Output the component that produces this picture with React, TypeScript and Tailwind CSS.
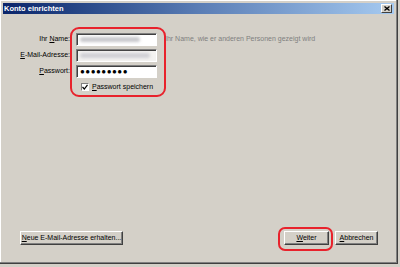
import React from "react";

const font = { fontFamily: '"Liberation Sans", "DejaVu Sans", Arial, sans-serif' };

function Btn({ children, className }: { children: React.ReactNode; className: string }) {
  return (
    <div className={`flex h-[14px] items-center justify-center border border-t-white border-l-white border-r-[#404040] border-b-[#404040] bg-[#d4d0c8] shadow-[inset_-1px_-1px_0_#808080] text-[7px] text-black ${className}`}>
      {children}
    </div>
  );
}

function Field({ children, bg }: { children?: React.ReactNode; bg: string }) {
  return (
    <div className={`flex h-[13px] w-[81px] items-center border border-t-[#808080] border-l-[#808080] border-r-white border-b-white ${bg} pl-[3px] shadow-[inset_1px_1px_0_#404040]`}>
      {children}
    </div>
  );
}

export default function App() {
  return (
    <div className="h-[267px] w-[400px] overflow-hidden bg-[#d4d0c8]" style={font}>
      <div className="flex h-[264px] w-[398px] flex-col border-b border-r border-b-[#404040] border-r-[#404040] shadow-[inset_-1px_-1px_0_#808080,inset_1px_1px_0_#ffffff] p-[3px]">
        <div className="flex h-[11px] items-center justify-between bg-gradient-to-r from-[#0a246a] via-[#5a7db5] to-[#a6caf0] pl-[1px] pr-[2px]">
          <span className="text-[7.5px] font-bold leading-none text-white">Konto einrichten</span>
          <div className="flex h-[9px] w-[11px] items-center justify-center border border-t-white border-l-white border-r-[#404040] border-b-[#404040] bg-[#d4d0c8]">
            <svg width="6" height="5" viewBox="0 0 6 5">
              <path d="M0.5 0.5 L5.5 4.5 M5.5 0.5 L0.5 4.5" stroke="#000" strokeWidth="1.3" />
            </svg>
          </div>
        </div>
        <div className="relative flex flex-1 flex-col">
          <div className="ml-[15px] mt-[19px] grid grid-cols-[52px_81px_auto] items-center gap-x-[6px] gap-y-[3px]">
            <span className="text-right text-[7px] text-black">Ihr <u>N</u>ame:</span>
            <Field bg="bg-white">
              <div className="h-[5px] w-[60px] rounded-sm bg-[#c8c8cc] blur-[1.5px]" />
            </Field>
            <span className="ml-[2px] text-[7px] text-[#808080]">Ihr Name, wie er anderen Personen gezeigt wird</span>
            <span className="text-right text-[7px] text-black"><u>E</u>-Mail-Adresse:</span>
            <Field bg="bg-[#f4f3f1]">
              <div className="h-[5px] w-[70px] rounded-sm bg-[#cfcfd4] blur-[1.5px]" />
            </Field>
            <span />
            <span className="text-right text-[7px] text-black"><u>P</u>asswort:</span>
            <Field bg="bg-white">
              <span className="text-[8px] leading-none tracking-[0.5px] text-black">●●●●●●●●●</span>
            </Field>
            <span />
          </div>
          <div className="ml-[78px] mt-[4px] flex items-center gap-[3px]">
            <div className="flex h-[8px] w-[8px] items-center justify-center border border-t-[#808080] border-l-[#808080] border-r-white border-b-white bg-white">
              <svg width="6" height="6" viewBox="0 0 6 6">
                <path d="M0.5 3 L2.3 5 L5.5 0.8" stroke="#000" strokeWidth="1.2" fill="none" />
              </svg>
            </div>
            <span className="text-[7px] text-black"><u>P</u>asswort speichern</span>
          </div>
          <div className="mt-auto mb-[15px] flex items-center">
            <Btn className="ml-[17px] w-[103px]"><span><u>N</u>eue E-Mail-Adresse erhalten...</span></Btn>
            <Btn className="ml-auto w-[45px]"><span><u>W</u>eiter</span></Btn>
            <Btn className="ml-[6px] mr-[16px] w-[43px]"><span><u>A</u>bbrechen</span></Btn>
          </div>
          <div className="pointer-events-none absolute left-[67px] top-[13px] h-[70px] w-[96px] rounded-[9px] border-[2.5px] border-[#e8222c]" />
          <div className="pointer-events-none absolute left-[275px] top-[213px] h-[24px] w-[55px] rounded-[7px] border-[2.5px] border-[#e8222c]" />
        </div>
      </div>
    </div>
  );
}
